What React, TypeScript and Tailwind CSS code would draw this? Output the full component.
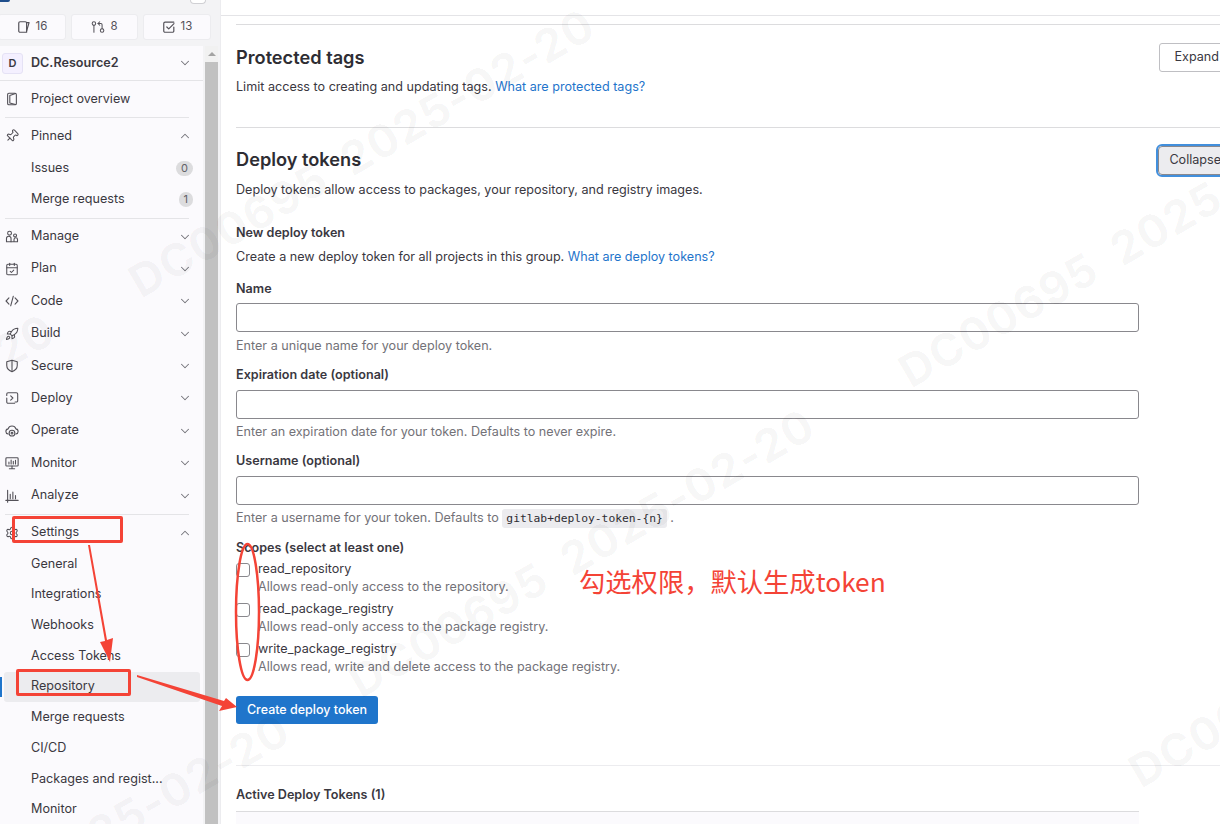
import { ChevronDown, ChevronUp, Pin, Rocket, Settings, CalendarCheck, GitPullRequestArrow } from 'lucide-react'
import type { ReactNode } from 'react'

const svgProps = {
    width: 14,
    height: 14,
    viewBox: '0 0 16 16',
    fill: 'none',
    stroke: 'currentColor',
    strokeWidth: 1.25,
    strokeLinecap: 'round' as const,
    strokeLinejoin: 'round' as const,
}

function OverviewIcon() {
    return (
        <svg {...svgProps}>
            <path d="M4.500 1.500h7a1.500 1.500 0 0 1 1.500 1.500v10a1.500 1.500 0 0 1-1.500 1.500h-7A1.500 1.500 0 0 1 3 13V3a1.500 1.500 0 0 1 1.500-1.500Z" />
            <path d="M5.500 4 12 1.700M5.500 4v8.500L12 14.300" />
        </svg>
    )
}

function UsersIcon() {
    return (
        <svg {...svgProps}>
            <circle cx="5.200" cy="3.700" r="2.200" />
            <circle cx="11.500" cy="6.200" r="1.700" />
            <path d="M1.700 13.500V9.700a2.600 2.600 0 0 1 5.200 0v3.800Z" />
            <path d="M6.900 13.500h7.400v-2.700a2 2 0 0 0-4 0v2.700" />
        </svg>
    )
}

function CodeIcon() {
    return (
        <svg {...svgProps}>
            <path d="M4.500 4.500 1.200 8l3.300 3.500M11.500 4.500 14.800 8l-3.300 3.500M9.500 2.500l-3 11" />
        </svg>
    )
}

function ShieldIcon() {
    return (
        <svg {...svgProps}>
            <path d="M2 3.200 8 1.500l6 1.700v4.300c0 3.400-2.600 5.800-6 7-3.400-1.200-6-3.600-6-7Z" />
            <path d="M8 1.800v12.400" />
        </svg>
    )
}

function DeployIcon() {
    return (
        <svg {...svgProps}>
            <path d="M2 5V3.500A1.500 1.500 0 0 1 3.500 2H13a1.500 1.500 0 0 1 1.500 1.500V11a1.500 1.500 0 0 1-1.500 1.500h-1.500" />
            <path d="M2 8v4.500A1.500 1.500 0 0 0 3.500 14H11" />
            <path d="m6.500 5.500 2.500 2.500-2.500 2.500" />
        </svg>
    )
}

function OperateIcon() {
    return (
        <svg {...svgProps}>
            <path d="M3.500 11.500A3 3 0 0 1 1 8.600a3 3 0 0 1 2.600-3 4.600 4.600 0 0 1 8.800 0 3 3 0 0 1 2.600 3 3 3 0 0 1-2.500 2.900" />
            <circle cx="8" cy="10.500" r="3.300" />
            <circle cx="8" cy="10.500" r="1" />
        </svg>
    )
}

function MonitorIcon() {
    return (
        <svg {...svgProps}>
            <rect x="1" y="2" width="14" height="9.500" rx="1" />
            <path d="M5 14.500h6M8 11.500v3M4.500 9V7M7 9V4.500M9.500 9V6M12 9V5" />
        </svg>
    )
}

function AnalyzeIcon() {
    return (
        <svg {...svgProps}>
            <path d="M1 13h14M3 1.500V15M6 11V6M9 11V3.500M12 11V7.500" />
        </svg>
    )
}

function IssueIcon() {
    return (
        <svg {...svgProps} strokeWidth={1.35}>
            <path d="M2 3.500A1.500 1.500 0 0 1 3.500 2h6A1.500 1.500 0 0 1 11 3.500V14H3.500A1.500 1.500 0 0 1 2 12.500Z" />
            <path d="M11 3h2.800L11 12.500" />
        </svg>
    )
}

function TodoIcon() {
    return (
        <svg {...svgProps} strokeWidth={1.35}>
            <path d="M13.500 8v4.500a1.500 1.500 0 0 1-1.500 1.500H3.500A1.500 1.500 0 0 1 2 12.500V4a1.500 1.500 0 0 1 1.500-1.500h10" />
            <path d="m5.500 8 2.200 2.200 6-6" />
        </svg>
    )
}

function NavRow({ icon, label, open }: { icon: ReactNode; label: string; open?: boolean }) {
    return (
        <div className="flex h-[32.4px] items-center pl-[5px] pr-[11px] text-[12.6px] text-[#3a383f]">
            <span className="flex w-[26px] shrink-0 text-[#535158]">{icon}</span>
            <span className="flex-1">{label}</span>
            {open === undefined ? null : open ? (
                <ChevronUp size={14} strokeWidth={1.75} className="text-[#737278]" />
            ) : (
                <ChevronDown size={14} strokeWidth={1.75} className="text-[#737278]" />
            )}
        </div>
    )
}

function SubRow({ label, badge, active }: { label: string; badge?: string; active?: boolean }) {
    return (
        <div className={`flex h-[30.7px] items-center pr-[10px] text-[12.6px] text-[#3a383f] ${active ? 'ml-[4px] mr-[3px] rounded-[3px] bg-[#ececef] pl-[27px]' : 'pl-[31px]'}`}>
            <span className="flex-1">{label}</span>
            {badge ? <span className="flex h-[15px] min-w-[14px] items-center justify-center rounded-full bg-[#dcdcde] px-[5px] text-[11px] text-[#626168]">{badge}</span> : null}
        </div>
    )
}

function Divider() {
    return <div className="my-[1.8px] ml-[5px] mr-[14px] h-px bg-[#e4e4e7]" />
}

function Sidebar() {
    return (
        <aside className="flex w-[220px] shrink-0 flex-col overflow-hidden bg-[#f3f3f5]">
            <div className="flex h-[14px] shrink-0 items-start justify-between">
                <div className="h-[2px] w-[10px] rounded-br bg-[#1f4e8c]" />
                <div className="mr-[14px] h-[4px] w-[16px] rounded-b-full border border-t-0 border-[#d0d0d4] bg-white" />
            </div>
            <div className="flex h-[26px] shrink-0 gap-[5px] pr-[7px]">
                <div className="-ml-[2px] flex w-[68px] items-center justify-center gap-[5px] rounded-[3px] border border-[#ececef] bg-[#fbfafd] text-[11.5px] text-[#535158]">
                    <IssueIcon />
                    16
                </div>
                <div className="flex w-[67px] items-center justify-center gap-[5px] rounded-[3px] border border-[#ececef] bg-[#fbfafd] text-[11.5px] text-[#535158]">
                    <GitPullRequestArrow size={14} strokeWidth={1.75} />
                    8
                </div>
                <div className="flex w-[68px] items-center justify-center gap-[5px] rounded-[3px] border border-[#ececef] bg-[#fbfafd] text-[11.5px] text-[#535158]">
                    <TodoIcon />
                    13
                </div>
            </div>
            <div className="mt-[6px] flex flex-1">
                <div className="w-[203px] bg-[#fbfafd]">
                    <div className="flex h-[35px] items-center border-b border-[#e4e4e7] pl-[2px] pr-[11px]">
                        <div className="mr-[8px] flex h-[21px] w-[21px] items-center justify-center rounded-[3px] border border-[#e5e2f5] bg-[#f4f0ff] text-[11px] font-semibold text-[#3a383f]">D</div>
                        <span className="flex-1 text-[12.6px] font-semibold text-[#3a383f]">DC.Resource2</span>
                        <ChevronDown size={14} strokeWidth={1.75} className="text-[#737278]" />
                    </div>
                    <div className="pt-[2px]">
                        <NavRow icon={<OverviewIcon />} label="Project overview" />
                        <Divider />
                        <NavRow icon={<Pin size={14} strokeWidth={1.8} className="rotate-45" />} label="Pinned" open />
                        <div className="pt-px pb-px">
                            <SubRow label="Issues" badge="0" />
                            <SubRow label="Merge requests" badge="1" />
                        </div>
                        <Divider />
                        <NavRow icon={<UsersIcon />} label="Manage" open={false} />
                        <NavRow icon={<CalendarCheck size={14} strokeWidth={1.8} />} label="Plan" open={false} />
                        <NavRow icon={<CodeIcon />} label="Code" open={false} />
                        <NavRow icon={<Rocket size={14} strokeWidth={1.8} />} label="Build" open={false} />
                        <NavRow icon={<ShieldIcon />} label="Secure" open={false} />
                        <NavRow icon={<DeployIcon />} label="Deploy" open={false} />
                        <NavRow icon={<OperateIcon />} label="Operate" open={false} />
                        <NavRow icon={<MonitorIcon />} label="Monitor" open={false} />
                        <NavRow icon={<AnalyzeIcon />} label="Analyze" open={false} />
                        <Divider />
                        <NavRow icon={<Settings size={14} strokeWidth={1.8} />} label="Settings" open />
                        <SubRow label="General" />
                        <SubRow label="Integrations" />
                        <SubRow label="Webhooks" />
                        <SubRow label="Access Tokens" />
                        <div className="relative">
                            <div className="absolute left-0 top-[5px] h-[20px] w-[2px] bg-[#1f75cb]" />
                            <SubRow label="Repository" active />
                        </div>
                        <SubRow label="Merge requests" />
                        <SubRow label="CI/CD" />
                        <SubRow label="Packages and regist..." />
                        <SubRow label="Monitor" />
                    </div>
                </div>
                <div className="ml-[2px] flex w-[13px] flex-col bg-[#f1f1f1]">
                    <div className="flex h-[16px] items-center justify-center">
                        <div className="h-0 w-0 border-x-[4px] border-b-[4px] border-x-transparent border-b-[#a3a3a3]" />
                    </div>
                    <div className="flex-1 bg-[#c1c1c1]" />
                </div>
            </div>
        </aside>
    )
}

function HelpText({ children }: { children: ReactNode }) {
    return <p className="text-[12.6px] leading-[18px] text-[#737278]">{children}</p>
}

function Field({ label, help, tight }: { label: string; help: ReactNode; tight?: boolean }) {
    return (
        <div className="h-[86px]">
            <label className={`block text-[12.6px] font-semibold leading-[18px] text-[#3a383f] ${tight ? 'h-[23px]' : 'h-[24px]'}`}>{label}</label>
            <input className="block h-[29px] w-[903px] rounded-[3px] border border-[#89888d] bg-white" />
            <div className={tight ? 'mt-[5px]' : 'mt-[4px]'}>
                <HelpText>{help}</HelpText>
            </div>
        </div>
    )
}

function Scope({ name, help }: { name: string; help: string }) {
    return (
        <div className="flex h-[40px] gap-[7px]">
            <div className="mt-[3px] h-[14px] w-[14px] shrink-0 rounded-[3px] border border-[#89888d] bg-white" />
            <div className="pl-px">
                <div className="text-[12.6px] leading-[18px] text-[#3a383f]">{name}</div>
                <HelpText>{help}</HelpText>
            </div>
        </div>
    )
}

function Main() {
    return (
        <main className="flex-1 border-l border-[#ececef] bg-white">
            <div className="mt-[15px] h-px w-[1000px] bg-[#e4e4e7]" />
            <div className="ml-[15px] w-[1000px]">
                <div className="mt-[8px] h-px bg-[#dcdcde]" />
                <section className="flex h-[102px] w-[998px] justify-between pt-[19px]">
                    <div>
                        <h2 className="text-[18.2px] font-semibold leading-[26px] text-[#2e2d33]">Protected tags</h2>
                        <p className="mt-[8px] text-[12.6px] leading-[18px] text-[#3a383f]">
                            Limit access to creating and updating tags. <a className="text-[#1f75cb]">What are protected tags?</a>
                        </p>
                    </div>
                    <button className="-mt-px h-[29px] rounded-[3px] border border-[#bfbfc3] bg-white px-[14px] text-[12.6px] text-[#3a383f]">Expand</button>
                </section>
                <div className="h-px bg-[#dcdcde]" />
                <section className="flex h-[96px] w-[996px] justify-between pt-[18px]">
                    <div>
                        <h2 className="text-[18.2px] font-semibold leading-[26px] text-[#2e2d33]">Deploy tokens</h2>
                        <p className="mt-[9px] text-[12.6px] leading-[18px] text-[#3a383f]">Deploy tokens allow access to packages, your repository, and registry images.</p>
                    </div>
                    <button className="h-[29px] rounded-[4px] border border-[#89888d] bg-[#ececef] px-[10px] text-[12.6px] text-[#3a383f] outline-2 outline-[#428fdc]">Collapse</button>
                </section>
                <h3 className="h-[24px] text-[12.6px] font-semibold leading-[18px] text-[#3a383f]">New deploy token</h3>
                <p className="h-[32px] text-[12.6px] leading-[18px] text-[#3a383f]">
                    Create a new deploy token for all projects in this group. <a className="text-[#1f75cb]">What are deploy tokens?</a>
                </p>
                <Field tight label="Name" help="Enter a unique name for your deploy token." />
                <Field label="Expiration date (optional)" help="Enter an expiration date for your token. Defaults to never expire." />
                <Field
                    label="Username (optional)"
                    help={
                        <>
                            Enter a username for your token. Defaults to{' '}
                            <code className="rounded-[3px] bg-[#ececef] px-[4px] py-[3px] font-['DejaVu_Sans_Mono',monospace] text-[11.3px] text-[#2e2d33]">gitlab+deploy-token-{'{n}'}</code> .
                        </>
                    }
                />
                <h3 className="mt-px h-[21px] text-[12.6px] font-semibold leading-[18px] text-[#3a383f]">Scopes (select at least one)</h3>
                <Scope name="read_repository" help="Allows read-only access to the repository." />
                <Scope name="read_package_registry" help="Allows read-only access to the package registry." />
                <Scope name="write_package_registry" help="Allows read, write and delete access to the package registry." />
                <button className="mt-[16px] h-[28px] w-[142px] rounded-[3px] bg-[#1f75cb] text-[12.5px] font-medium text-white">Create deploy token</button>
                <div className="mt-[41px] h-px bg-[#ececef]" />
                <h3 className="mt-[20px] h-[25px] text-[12.6px] font-semibold leading-[18px] text-[#3a383f]">Active Deploy Tokens (1)</h3>
                <div className="h-[14px] w-[903px] border-t border-[#dcdcde] bg-[#fbfafd]" />
            </div>
        </main>
    )
}

const marks = [
    'left-[145px] top-[258px]',
    'left-[915px] top-[348px]',
    'left-[365px] top-[658px]',
    'left-[-160px] top-[963px]',
    'left-[1145px] top-[748px]',
    'left-[-395px] top-[563px]',
]

// 水印和红色标注都盖在页面上
function Overlay() {
    return (
        <div className="pointer-events-none absolute inset-0 overflow-hidden">
            <div className="absolute left-[12px] top-[516px] h-[27px] w-[111px] rounded-[2px] border-[3px] border-[#f44336]" />
            <div className="absolute left-[16px] top-[669px] h-[27px] w-[115px] rounded-[2px] border-[3px] border-[#f44336]" />
            <svg className="absolute inset-0" width="1220" height="824" viewBox="0 0 1220 824">
                <polygon points="88,545 90,545 107,640 113,638 110,662 100,642 105,641" fill="#f44336" />
                <polygon points="137,675 224,701 226,698 237,707 219,711 222,706 137,677" fill="#f44336" />
                <ellipse cx="247.500" cy="612" rx="11.500" ry="68" fill="none" stroke="#f44336" strokeWidth="2.500" />
            </svg>
            <div className="absolute left-[579px] top-[564px] font-['Noto_Sans_CJK_SC','Noto_Sans',sans-serif] text-[26.3px] leading-[34px] text-[#f44336]">勾选权限，默认生成token</div>
            {marks.map((pos) => (
                <div key={pos} className={`absolute ${pos} origin-bottom-left rotate-[-30deg] whitespace-pre text-[45px] font-bold leading-[48px] tracking-[1px] text-black/[0.04]`}>
                    DC00695  2025-02-20
                </div>
            ))}
        </div>
    )
}

export default function App() {
    return (
        <div className="relative flex h-[824px] w-[1220px] overflow-hidden bg-white font-['Inter',sans-serif]">
            <Sidebar />
            <Main />
            <Overlay />
        </div>
    )
}
